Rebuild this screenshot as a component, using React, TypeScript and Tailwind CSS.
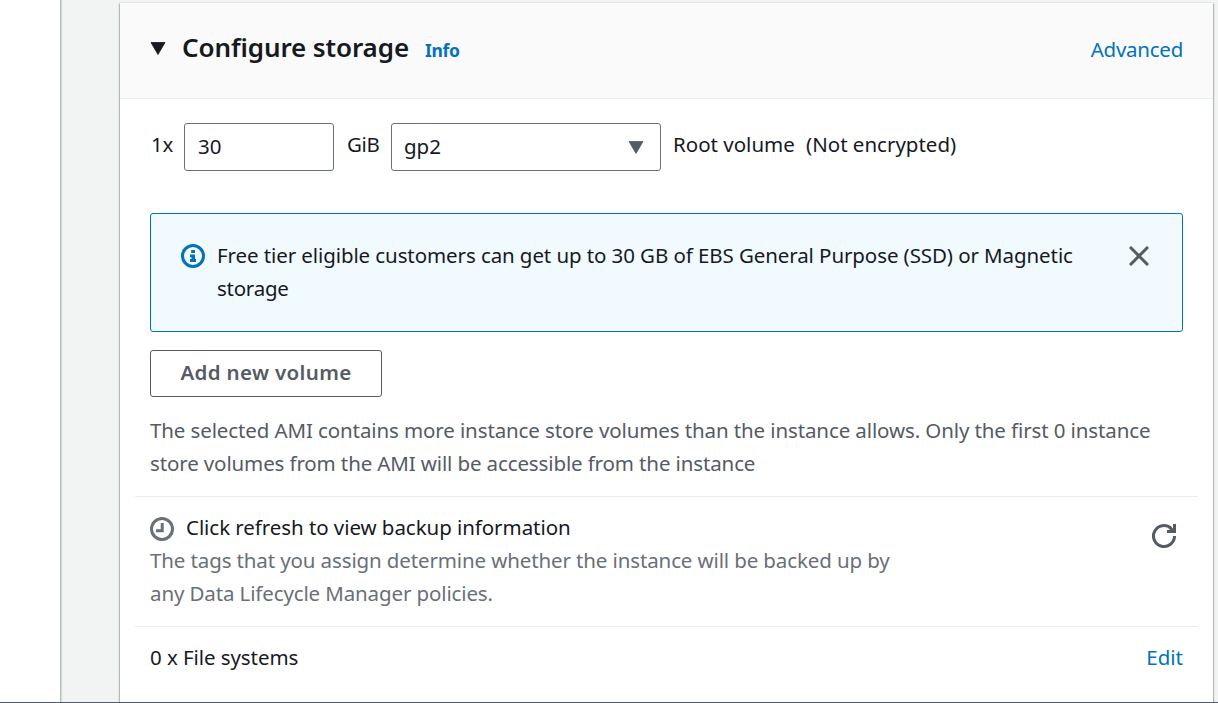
import type { ReactNode } from 'react';

function Line({ className = '', children }: { className?: string; children: ReactNode }) {
  return <span className={`block whitespace-pre leading-[33px] ${className}`}>{children}</span>;
}

function Caret({ className }: { className: string }) {
  return (
    <svg className={className} width="16" height="13" viewBox="0 0 16 13" fill="currentColor">
      <path d="M1 0.5h14L8 12.5z" stroke="currentColor" strokeWidth="0.8" strokeLinejoin="round" />
    </svg>
  );
}

export default function App() {
  return (
    <div className="flex h-[703px] w-[1218px] flex-col overflow-hidden bg-[#f2f3f3] font-['Noto_Sans',sans-serif] text-[20.5px] text-[#16191f]">
      <div className="flex min-h-0 flex-1">
        <aside className="w-[61px] shrink-0 border-r border-[#b8bec2] bg-white shadow-[1px_0_1px_#d5dbdb]" />
        <main className="min-w-0 flex-1 pl-[59px] pr-[5px] pt-[3px]">
          <section className="h-[720px] bg-white shadow-[1px_1px_1px_#b4baba,-1px_1px_1px_#b4baba,0_0_0_1px_#e4e7e7]">
            <header className="flex h-24 items-start justify-between border-b border-[#eaeded] bg-[#fafafa] px-[30px]">
              <div className="flex items-start">
                <Caret className="mt-[39px]" />
                <h2 className="ml-4 mt-6 w-[226px] whitespace-nowrap text-[26px] font-semibold leading-[40px] tracking-[-0.1px]">Configure storage</h2>
                <a className="ml-[17px] mt-[31px] whitespace-nowrap text-[17.5px] font-bold leading-[33px] tracking-[-0.3px] text-[#0073bb]">Info</a>
              </div>
              <a className="mt-[30px] whitespace-nowrap leading-[33px] tracking-[-0.25px] text-[#0073bb]">Advanced</a>
            </header>

            <div className="flex h-[114px] items-start pl-[31px] pt-6">
              <Line className="mt-[5px] w-[33px] tracking-[-0.3px]">1x</Line>
              <div className="flex h-12 w-[150px] items-center rounded-[3px] border border-[#687078] pb-[2px] pl-[13px]">30</div>
              <Line className="ml-[13px] mt-[5px] w-[44px] tracking-[-0.3px]">GiB</Line>
              <div className="flex h-12 w-[270px] items-center justify-between rounded-[3px] border border-[#687078] pl-3 pr-4">
                <span className="pb-[2px]">gp2</span>
                <Caret className="text-[#545b64]" />
              </div>
              <Line className="ml-[12px] mt-[5px] w-[133px]">Root volume</Line>
              <Line className="mt-[5px]">(Not encrypted)</Line>
            </div>

            <div className="mx-[30px] flex h-[119px] items-start rounded-[3px] border border-[#0073bb] bg-[#f1faff] pl-[30px] pt-[25px]">
              <svg className="mt-[5px]" width="24" height="24" viewBox="0 0 24 24" fill="#0073bb">
                <circle cx="12" cy="12" r="10.5" fill="none" stroke="#0073bb" strokeWidth="3" />
                <path d="M10.2 6h3.8v3h-3.8zM9 10.5h5V15h1v3H9v-3h1.5v-1.7H9z" />
              </svg>
              <div className="ml-3">
                <Line className="tracking-[-0.09px]">Free tier eligible customers can get up to 30 GB of EBS General Purpose (SSD) or Magnetic</Line>
                <Line className="tracking-[-0.25px]">storage</Line>
              </div>
              <svg className="ml-auto mr-[33px] mt-[7px]" width="20" height="20" viewBox="0 0 20 20" stroke="#545b64" strokeWidth="3">
                <path d="M1 1l18 18M19 1L1 19" />
              </svg>
            </div>

            <button className="ml-[30px] mt-[18px] flex h-[47px] w-[232px] items-center justify-center whitespace-nowrap rounded-[3px] border border-[#545b64] bg-white pb-[2px] font-semibold tracking-[0.35px] text-[#545b64]">
              Add new volume
            </button>

            <div className="ml-[30px] mt-[17px] text-[#545b64]">
              <Line className="tracking-[-0.11px]">The selected AMI contains more instance store volumes than the instance allows. Only the first 0 instance</Line>
              <Line className="tracking-[-0.125px]">store volumes from the AMI will be accessible from the instance</Line>
            </div>

            <div className="mx-[15px] mt-[16px] flex h-[130px] items-start justify-between border-t border-[#eaeded] pl-[15px] pr-[21px] pt-[14px]">
              <div>
                <div className="flex">
                  <svg className="mt-[6px]" width="24" height="24" viewBox="0 0 24 24" fill="none" stroke="#687078" strokeWidth="3">
                    <circle cx="12" cy="12" r="10.5" />
                    <path d="M12.2 6v7.8H6" />
                  </svg>
                  <Line className="ml-3 tracking-[-0.06px]">Click refresh to view backup information</Line>
                </div>
                <div className="text-[#687078]">
                  <Line className="tracking-[-0.12px]">The tags that you assign determine whether the instance will be backed up by</Line>
                  <Line className="tracking-[-0.125px]">any Data Lifecycle Manager policies.</Line>
                </div>
              </div>
              <svg className="mt-[13px]" width="25" height="25" viewBox="0 0 25 25" fill="none" stroke="#545b64" strokeWidth="3">
                <path d="M22.5 12A10.5 10.5 0 1 1 19 4.2" />
                <path d="M21 0h3v9h-9V6h3.3L16.5 4.2l2-2L21 4.5z" fill="#545b64" stroke="none" />
              </svg>
            </div>

            <div className="mx-[15px] flex justify-between border-t border-[#eaeded] px-[15px] pt-[14px]">
              <Line className="tracking-[-0.07px]">0 x File systems</Line>
              <a className="leading-[33px] text-[#0073bb]">Edit</a>
            </div>
          </section>
        </main>
      </div>
      <div className="h-px shrink-0 bg-[#545b64]" />
    </div>
  );
}
